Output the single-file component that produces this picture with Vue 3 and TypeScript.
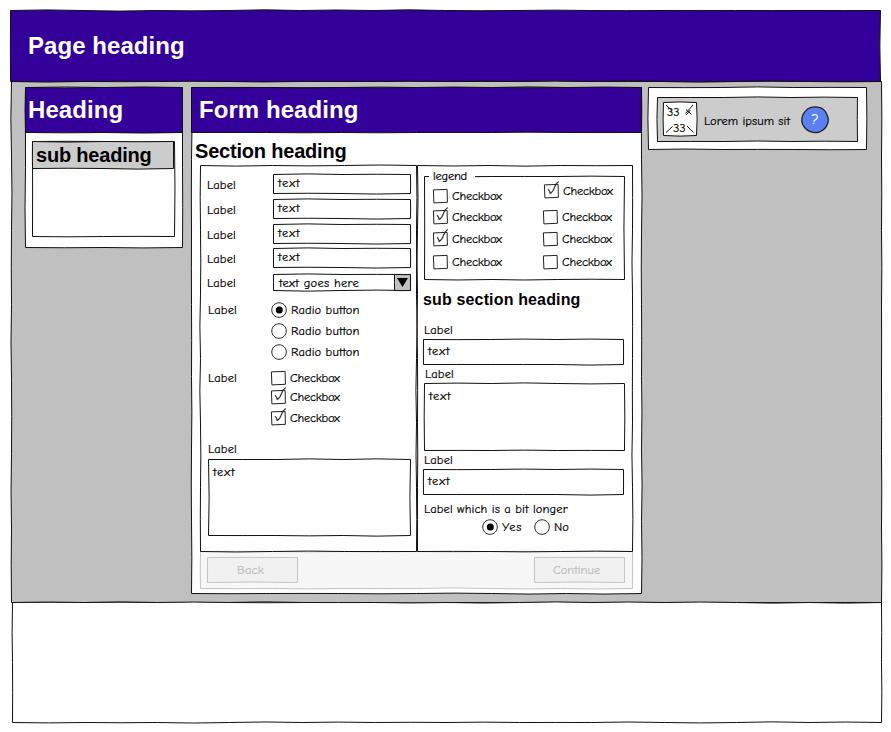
<script setup lang="ts">
import { h, type FunctionalComponent } from 'vue'

interface RoughProps { w: number; h: number; fill?: string; stroke?: string; seed?: number }

// One side of a box as a gently wavering line
function side(x1: number, y1: number, x2: number, y2: number, rnd: () => number): string {
  const len = Math.hypot(x2 - x1, y2 - y1)
  const n = Math.max(1, Math.round(len / 70))
  const nx = y1 === y2 ? 0 : 1
  const ny = 1 - nx
  const amp = len < 30 ? 0.3 : 1.3
  let d = ''
  for (let i = 0; i < n; i++) {
    const a = (i + 0.5) / n
    const b = (i + 1) / n
    const o = (rnd() - 0.5) * 2 * amp
    d += `Q${(x1 + (x2 - x1) * a + nx * o).toFixed(2)} ${(y1 + (y2 - y1) * a + ny * o).toFixed(2)} `
    d += `${(x1 + (x2 - x1) * b).toFixed(2)} ${(y1 + (y2 - y1) * b).toFixed(2)}`
  }
  return d
}

const Rough: FunctionalComponent<RoughProps> = (p) => {
  let s = (p.seed ?? 1) * 7919 + p.w * 31 + p.h
  const rnd = () => {
    s = (s * 16807) % 2147483647
    return (s % 10000) / 10000
  }
  const r = p.w - 0.5
  const b = p.h - 0.5
  const d = 'M.5 .5' + side(0.5, 0.5, r, 0.5, rnd) + side(r, 0.5, r, b, rnd) + side(r, b, 0.5, b, rnd) + side(0.5, b, 0.5, 0.5, rnd) + 'Z'
  return h('svg', { class: 'rough', width: p.w, height: p.h, 'aria-hidden': 'true' }, [
    h('path', { d, fill: p.fill ?? 'none', stroke: p.stroke ?? '#111' }),
  ])
}
Rough.props = ['w', 'h', 'fill', 'stroke', 'seed']

const Check: FunctionalComponent<{ on?: boolean }> = (p) =>
  h('svg', { class: 'mark', width: 14, height: 14, 'aria-hidden': 'true' }, [
    h('path', { d: 'M.4 .9 14.1 .4 14.4 13.3 .9 13.9Z', fill: '#fff', stroke: '#222' }),
    p.on ? h('path', { d: 'M4 5.2Q5.8 7 6.2 9.4Q9 8 10.4 3.6T14.7-2.6', fill: 'none', stroke: '#333', 'stroke-width': 1.2 }) : null,
  ])
Check.props = { on: Boolean }

const Radio: FunctionalComponent<{ on?: boolean }> = (p) =>
  h('svg', { class: 'mark', width: 16, height: 16, 'aria-hidden': 'true' }, [
    h('path', { d: 'M8 .8C12 .7 15.3 3.8 15.3 8S12 15.3 8 15.3 .8 12.2 .8 8 4 .9 8 .8Z', fill: '#fff', stroke: '#222' }),
    p.on ? h('circle', { cx: 8.3, cy: 8, r: 3.5, fill: '#000' }) : null,
  ])
Radio.props = { on: Boolean }

const textFields = ['text', 'text', 'text', 'text']
const radios = [true, false, false]
const checks = [false, true, true]
const legendColumns = [
  [false, true, true, false],
  [true, false, false, false],
]
</script>

<template>
  <div class="page">
    <header class="top">
      <Rough :w="871" :h="72" fill="#330099" />
      <h1 class="big">Page heading</h1>
    </header>

    <main class="body">
      <Rough :w="871" :h="522" fill="#c0c0c0" />
      <aside class="nav">
        <Rough :w="158" :h="161" fill="#fff" />
        <div class="nav-head">
          <Rough :w="158" :h="46" fill="#330099" />
          <h2 class="big">Heading</h2>
        </div>
        <div class="nav-card">
          <Rough :w="143" :h="96" fill="#fff" />
          <div class="nav-sub">
            <Rough :w="142" :h="28" fill="#ccc" />
            <h3 class="mid">sub heading</h3>
          </div>
        </div>
      </aside>

      <section class="form">
        <Rough :w="451" :h="507" fill="#fff" />
        <div class="form-head">
          <Rough :w="451" :h="46" fill="#330099" />
          <h2 class="big">Form heading</h2>
        </div>
        <h3 class="mid section-title">Section heading</h3>
        <div class="columns">
          <div class="left">
            <Rough :w="217" :h="387" />
            <div v-for="(t, i) in textFields" :key="i" class="row">
              <span class="t lab">Label</span>
              <span class="input"><Rough :w="138" :h="20" :seed="3" /><span class="t word">{{ t }}</span></span>
            </div>
            <div class="row select-row">
              <span class="t lab">Label</span>
              <span class="select">
                <Rough :w="138" :h="17" />
                <span class="t goes">text goes here</span>
                <span class="arrow">
                  <Rough :w="17" :h="17" fill="#c0c0c0" />
                  <svg class="tri" width="11" height="9"><path d="M0 0H11L5.5 9Z" /></svg>
                </span>
              </span>
            </div>
            <div class="group">
              <span class="t lab">Label</span>
              <div class="radios">
                <div v-for="(on, i) in radios" :key="i" class="radio"><Radio :on="on" /><span class="t rb">Radio button</span></div>
              </div>
            </div>
            <div class="group checks">
              <span class="t lab">Label</span>
              <div>
                <div v-for="(on, i) in checks" :key="i" class="check"><Check :on="on" /><span class="t cb">Checkbox</span></div>
              </div>
            </div>
            <span class="t lab area-label">Label</span>
            <div class="area"><Rough :w="203" :h="77" /><span class="t word">text</span></div>
          </div>

          <div class="right">
            <Rough :w="216" :h="387" />
            <div class="fieldset">
              <Rough :w="201" :h="104" />
              <span class="t legend">legend</span>
              <div class="legend-grid">
                <div v-for="(col, c) in legendColumns" :key="c" class="legend-col">
                  <div v-for="(on, i) in col" :key="i" class="check"><Check :on="on" /><span class="t cb">Checkbox</span></div>
                </div>
              </div>
            </div>
            <h4 class="small">sub section heading</h4>
            <span class="t lab r1">Label</span>
            <div class="wide"><Rough :w="201" :h="26" /><span class="t word">text</span></div>
            <span class="t lab r2">Label</span>
            <div class="wide tall"><Rough :w="201" :h="68" /><span class="t word">text</span></div>
            <span class="t lab">Label</span>
            <div class="wide"><Rough :w="201" :h="26" /><span class="t word">text</span></div>
            <span class="t longer">Label which is a bit longer</span>
            <div class="yesno">
              <Radio on /><span class="t yes">Yes</span>
              <Radio /><span class="t no">No</span>
            </div>
          </div>
        </div>
        <div class="actions">
          <Rough :w="433" :h="38" fill="#f7f7f7" stroke="#c4c4c4" />
          <div class="btn"><Rough :w="91" :h="26" fill="#f1f1f1" stroke="#c4c4c4" /><span class="t back">Back</span></div>
          <div class="btn"><Rough :w="91" :h="26" fill="#f1f1f1" stroke="#c4c4c4" /><span class="t cont">Continue</span></div>
        </div>
      </section>

      <aside class="help">
        <Rough :w="219" :h="63" fill="#fff" />
        <div class="help-inner">
          <Rough :w="201" :h="45" fill="#ccc" />
          <div class="thumb">
            <Rough :w="34" :h="34" fill="#fff" />
            <svg class="cross" width="34" height="34"><path d="M3 3 9 8.5M30 3 22.5 11.5M23 7.5 28.5 12.5M27.5 8 23 13M3 30.5 9.5 24.5M24 24 30.5 30.5" /></svg>
            <span class="t n1">33</span>
            <span class="t n2">33</span>
          </div>
          <span class="t lorem">Lorem ipsum sit</span>
          <div class="ask">
            <svg class="rough" width="28" height="28"><path d="M10 1.4Q14 .3 17 1.2Q23 2.2 25.5 7.5Q27.8 12 27.2 15.5Q26 21 22 24Q18 27 14 26.6Q8 26 4.5 22.5Q1 19 .8 14.5Q.8 9 4.2 5.5Q6 2.5 10 1.4Z" /></svg>
            <span class="t q">?</span>
          </div>
        </div>
      </aside>
    </main>

    <footer class="foot"><Rough :w="870" :h="121" fill="#fff" /></footer>
  </div>
</template>

<style>
body { margin: 0; background: #fff; }
.rough { position: absolute; left: 0; top: 0; overflow: visible; display: block; }
.mark { display: block; flex: none; overflow: visible; }
</style>

<style scoped>
.page { width: 891px; height: 732px; padding-top: 10px; box-sizing: border-box; overflow: hidden; background: #fff; color: #000; }
.page * { box-sizing: border-box; }
h1, h2, h3, h4 { margin: 0; position: relative; font-family: "Liberation Sans", Arial, sans-serif; font-weight: bold; white-space: nowrap; }
.big { font-size: 24px; line-height: 28px; letter-spacing: 0.06px; color: #fff; }
.mid { font-size: 20px; line-height: 24px; letter-spacing: -0.2px; }
.small { font-size: 16px; line-height: 20px; letter-spacing: 0.15px; margin: 10px 0 0 6px; }
.t { position: relative; display: block; font: 12.5px/16px "Comic Neue", "Comic Sans MS", Lato, sans-serif; -webkit-text-stroke: 0.2px currentColor; white-space: nowrap; }
.top, .body, .foot, .nav, .nav-head, .nav-card, .nav-sub, .form, .form-head, .left, .right, .input, .select, .arrow, .area, .fieldset, .wide, .actions, .btn, .help, .help-inner, .thumb, .ask { position: relative; }
.top { width: 871px; height: 72px; margin-left: 10px; padding: 22px 0 0 18px; z-index: 1; }
.body { width: 871px; height: 522px; margin: -1px 0 0 11px; padding: 6px 0 0 14px; display: flex; align-items: flex-start; }
.foot { width: 870px; height: 121px; margin: -1px 0 0 12px; }

.nav { width: 158px; height: 161px; }
.nav-head { height: 46px; padding: 9px 0 0 3px; }
.nav-card { width: 143px; height: 96px; margin: 8px 0 0 7px; }
.nav-sub { width: 142px; height: 28px; padding: 2px 0 0 4px; }

.form { width: 451px; height: 507px; margin-left: 8px; }
.form-head { height: 46px; padding: 9px 0 0 8px; }
.section-title { margin: 6px 0 2px 4px; }
.columns { position: relative; z-index: 1; display: flex; width: 433px; margin-left: 9px; }
.left { width: 217px; height: 387px; padding-top: 9px; }
.right { width: 216px; height: 387px; padding-top: 11px; }
.lab { letter-spacing: 0.15px; }
.word { letter-spacing: 0.9px; }
.rb { letter-spacing: 0.1px; }
.cb { letter-spacing: -0.25px; }
.row { display: flex; height: 25px; padding-left: 7px; }
.row:nth-of-type(3) { height: 24px; }
.row:nth-of-type(4) { height: 26px; }
.row .lab { width: 66px; top: 3px; }
.input { width: 138px; height: 20px; padding: 1px 0 0 5px; }
.row.select-row { height: 26px; }
.select { display: flex; width: 138px; height: 17px; padding-left: 6px; justify-content: space-between; }
.goes { letter-spacing: 0.3px; padding-top: 1px; }
.row.select-row .lab { top: 1px; }
.arrow { width: 17px; height: 17px; padding: 4px 0 0 3px; }
.tri { position: relative; display: block; }
.group { display: flex; padding-left: 8px; }
.group .lab { width: 63px; top: 2px; }
.radios { margin: -1px 0 1px; }
.radio { display: flex; align-items: center; height: 21px; gap: 4px; }
.check { display: flex; align-items: flex-start; height: 21px; gap: 5px; }
.check .mark { margin-top: 2px; }
.check .t { margin-top: 1px; }
.checks { padding-top: 6px; height: 78px; }
.checks .lab { top: 1px; }
.checks .check:first-child { height: 19px; }
.area-label { margin-left: 8px; }
.area { width: 203px; height: 77px; margin: 2px 0 0 8px; padding: 5px 0 0 5px; }

.fieldset { display: flex; flex-direction: column; width: 201px; height: 104px; margin-left: 7px; }
.legend { width: 46px; margin: -8px 0 0 5px; padding-left: 4px; letter-spacing: -0.25px; background: #fff; flex: none; }
.legend-grid { display: flex; padding: 3px 0 0 9px; }
.legend-col { width: 110px; flex: none; }
.legend-col .check:nth-child(2) { height: 22px; }
.legend-col .check:nth-child(3) { height: 23px; }
.legend-col + .legend-col .check:first-child { height: 26px; margin: -5px 0 0 1px; }
.small + .lab { margin-top: 11px; }
.right > .lab { margin-left: 7px; }
.right > .r1 { top: 1px; }
.right > .r2 { margin-left: 8px; top: 1px; }
.wide { width: 201px; height: 26px; margin: 2px 0 0 6px; padding: 4px 0 0 5px; }
.tall { height: 68px; margin-left: 7px; padding-top: 5px; }
.tall + .lab { top: 1px; }
.longer { margin: 6px 0 0 7px; letter-spacing: 0.12px; }
.yesno { display: flex; align-items: center; height: 21px; margin-top: -1px; padding-left: 65px; }
.yes { width: 32px; margin-left: 4px; letter-spacing: 0.6px; }
.no { margin-left: 4px; }

.actions { display: flex; justify-content: space-between; width: 433px; height: 38px; margin: -1px 0 0 9px; padding: 6px 8px 0 7px; }
.btn { width: 91px; height: 26px; padding-top: 5px; color: #bdbdbd; }
.back { margin-left: 30px; letter-spacing: 0.2px; }
.cont { margin-left: 19px; }

.help { width: 219px; height: 63px; margin-left: 6px; padding: 10px 0 0 9px; }
.help-inner { display: flex; width: 201px; height: 45px; padding: 5px 0 0 6px; }
.thumb { width: 34px; height: 34px; padding: 2px 0 0 4px; }
.cross { position: absolute; left: 0; top: 0; fill: none; stroke: #111; }
.n2 { padding-left: 6px; }
.lorem { margin: 11px 0 0 7px; width: 97px; letter-spacing: 0.05px; }
.ask { width: 28px; height: 28px; margin-top: 4px; padding-top: 6px; text-align: center; color: #fff; }
.q { font-size: 14px; }
.ask path { fill: #5b7ff5; stroke: #222; stroke-width: 1.3; }
</style>
